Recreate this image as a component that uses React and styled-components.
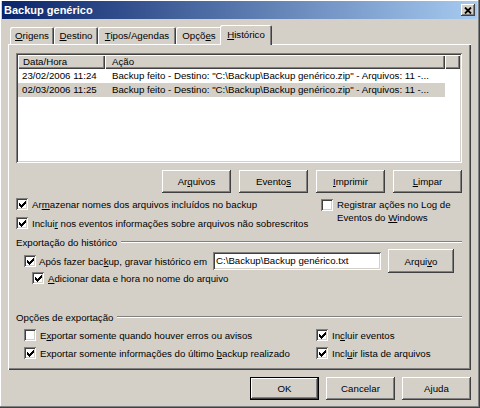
import React from "react";
import styled, { createGlobalStyle, css } from "styled-components";

const GlobalStyle = createGlobalStyle`
  html, body {
    margin: 0;
    padding: 0;
    background: #d4d0c8;
  }
  body {
    font-family: "Liberation Sans", Arial, sans-serif;
    font-size: 9.7px;
    color: #000;
  }
`;

const raised = css`
  box-shadow: inset -1px -1px #404040, inset 1px 1px #fff,
    inset -2px -2px #808080, inset 2px 2px #d4d0c8;
`;

const sunken = css`
  box-shadow: inset 1px 1px #808080, inset -1px -1px #fff,
    inset 2px 2px #404040, inset -2px -2px #d4d0c8;
`;

const Window = styled.div`
  width: 480px;
  height: 408px;
  box-sizing: border-box;
  padding: 1px 3px 3px 2px;
  background: #d4d0c8;
  display: flex;
  flex-direction: column;
  box-shadow: inset -1px -1px #404040, inset -2px -2px #808080,
    inset 1px 1px #fff;
`;

const TitleBar = styled.div`
  height: 18px;
  flex-shrink: 0;
  display: flex;
  align-items: center;
  justify-content: space-between;
  padding: 0 2px;
  background: linear-gradient(to right, #0a246a, #a6caf0);
`;

const Title = styled.span`
  color: #fff;
  font-weight: bold;
  font-size: 11px;
`;

const CloseButton = styled.div`
  width: 14px;
  height: 12px;
  background: #d4d0c8;
  display: flex;
  align-items: center;
  justify-content: center;
  ${raised}
`;

const Body = styled.div`
  flex: 1;
  display: flex;
  flex-direction: column;
  padding: 0 6px;
`;

const TabStrip = styled.div`
  display: flex;
  align-items: flex-end;
  height: 19px;
  margin-top: 6px;
  padding-left: 2px;
`;

const Tab = styled.div`
  width: ${(p) => p.$w}px;
  height: 17px;
  box-sizing: border-box;
  padding-top: 2px;
  text-align: center;
  line-height: 14px;
  background: #d4d0c8;
  border-radius: 2px 2px 0 0;
  box-shadow: inset 1px 1px #fff, inset -1px 0 #404040, inset -2px 0 #808080;
  white-space: nowrap;
  ${(p) =>
    p.$active &&
    css`
      width: ${p.$w + 4}px;
      height: 20px;
      margin: 0 -2px -1px;
      padding-top: 3px;
      position: relative;
      z-index: 1;
    `}
`;

const Panel = styled.div`
  height: 326px;
  box-sizing: border-box;
  padding: 9px 9px 8px 8px;
  display: flex;
  flex-direction: column;
  box-shadow: inset 1px 1px #fff, inset -1px -1px #404040,
    inset -2px -2px #808080;
`;

const ListView = styled.div`
  height: 110px;
  flex-shrink: 0;
  box-sizing: border-box;
  padding: 2px;
  background: #fff;
  display: flex;
  flex-direction: column;
  overflow: hidden;
  ${sunken}
`;

const ListHeader = styled.div`
  display: flex;
  height: 14px;
  flex-shrink: 0;
`;

const HeaderCell = styled.div`
  width: ${(p) => (p.$w ? `${p.$w}px` : "auto")};
  flex: ${(p) => (p.$w ? "0 0 auto" : "1")};
  box-sizing: border-box;
  padding-left: ${(p) => p.$pl || 0}px;
  line-height: 14px;
  background: #d4d0c8;
  box-shadow: inset 1px 1px #fff, inset -1px -1px #404040,
    inset -2px -2px #808080;
`;

const ListRow = styled.div`
  display: flex;
  width: 427px;
  height: 14px;
  line-height: 14px;
  background: ${(p) => (p.$selected ? "#d4d0c8" : "transparent")};
`;

const Cell = styled.div`
  width: ${(p) => p.$w}px;
  flex-shrink: 0;
  box-sizing: border-box;
  padding-left: ${(p) => p.$pl}px;
  white-space: nowrap;
  overflow: hidden;
`;

const ButtonRow = styled.div`
  display: flex;
  justify-content: flex-end;
  gap: 8px;
  margin-top: 7px;
`;

const Button = styled.div`
  width: ${(p) => p.$w || 69}px;
  height: ${(p) => p.$h || 23}px;
  flex-shrink: 0;
  box-sizing: border-box;
  display: flex;
  align-items: center;
  justify-content: center;
  background: #d4d0c8;
  ${raised}
  ${(p) =>
    p.$default &&
    css`
      box-shadow: inset 0 0 0 1px #000, inset -2px -2px #404040,
        inset 2px 2px #fff, inset -3px -3px #808080;
    `}
`;

const OptionsGrid = styled.div`
  display: grid;
  grid-template-columns: ${(p) => p.$col}px 1fr;
  margin-top: 2px;
`;

const Column = styled.div`
  display: flex;
  flex-direction: column;
  gap: ${(p) => p.$gap || 0}px;
  padding-left: ${(p) => p.$indent || 0}px;
`;

const CheckRow = styled.div`
  display: flex;
  align-items: ${(p) => (p.$top ? "flex-start" : "center")};
  gap: 4px;
  height: ${(p) => p.$h || 18}px;
  padding-left: ${(p) => p.$indent || 0}px;
  padding-top: ${(p) => (p.$top ? 3 : 0)}px;
  margin-top: ${(p) => p.$mt || 0}px;
  box-sizing: border-box;
  white-space: nowrap;
`;

const Box = styled.span`
  width: 12px;
  height: 12px;
  flex-shrink: 0;
  box-sizing: border-box;
  background: #fff;
  display: flex;
  align-items: center;
  justify-content: center;
  margin-top: ${(p) => p.$mt || 0}px;
  ${sunken}
`;

const Label = styled.span`
  line-height: 13px;
`;

const GroupTitle = styled.div`
  display: flex;
  align-items: center;
  gap: 4px;
  height: 14px;
  margin-top: ${(p) => p.$mt}px;
  white-space: nowrap;
  &::after {
    content: "";
    flex: 1;
    border-top: 1px solid #808080;
    border-bottom: 1px solid #fff;
  }
`;

const ExportRow = styled.div`
  display: flex;
  align-items: center;
  height: 24px;
  padding: 0 9px 0 8px;
  gap: 3px;
  white-space: nowrap;
`;

const Spacer = styled.div`
  flex: 1;
  min-width: 0;
`;

const TextInput = styled.div`
  width: 168px;
  height: 18px;
  flex-shrink: 0;
  box-sizing: border-box;
  padding: 0 3px;
  line-height: 18px;
  background: #fff;
  margin-right: 4px;
  white-space: nowrap;
  overflow: hidden;
  ${sunken}
`;

const Footer = styled.div`
  display: flex;
  justify-content: flex-end;
  gap: 7px;
  margin-top: 7px;
`;

const CHECK = [
  "......X",
  ".....XX",
  "X...XXX",
  "XX.XXX.",
  "XXXXX..",
  ".XXX...",
  "..X....",
];

const CheckMark = () => (
  <svg width="7" height="7" viewBox="0 0 7 7" shapeRendering="crispEdges">
    {CHECK.flatMap((row, y) =>
      row
        .split("")
        .map((c, x) =>
          c === "X" ? <rect key={`${x}-${y}`} x={x} y={y} width="1" height="1" fill="#000" /> : null
        )
    )}
  </svg>
);

const Check = ({ on, mt }) => <Box $mt={mt}>{on && <CheckMark />}</Box>;

const rows = [
  {
    date: "23/02/2006 11:24",
    text: 'Backup feito - Destino: "C:\\Backup\\Backup genérico.zip" - Arquivos: 11 -...',
  },
  {
    date: "02/03/2006 11:25",
    text: 'Backup feito - Destino: "C:\\Backup\\Backup genérico.zip" - Arquivos: 11 -...',
    selected: true,
  },
];

export default function App() {
  return (
    <>
      <GlobalStyle />
      <Window>
        <TitleBar>
          <Title>Backup genérico</Title>
          <CloseButton>
            <svg width="8" height="7" viewBox="0 0 8 7">
              <path d="M1 0.5 L7 6.5 M7 0.5 L1 6.5" stroke="#000" strokeWidth="1.8" />
            </svg>
          </CloseButton>
        </TitleBar>
        <Body>
          <TabStrip>
            <Tab $w={44}><u>O</u>rigens</Tab>
            <Tab $w={44}><u>D</u>estino</Tab>
            <Tab $w={78}><u>T</u>ipos/Agendas</Tab>
            <Tab $w={46}>Opçõ<u>e</u>s</Tab>
            <Tab $w={48} $active><u>H</u>istórico</Tab>
          </TabStrip>
          <Panel>
            <ListView>
              <ListHeader>
                <HeaderCell $w={87} $pl={5}>Data/Hora</HeaderCell>
                <HeaderCell $w={340} $pl={7}>Ação</HeaderCell>
                <HeaderCell />
              </ListHeader>
              {rows.map((r) => (
                <ListRow key={r.date} $selected={r.selected}>
                  <Cell $w={87} $pl={4}>{r.date}</Cell>
                  <Cell $w={340} $pl={7}>{r.text}</Cell>
                </ListRow>
              ))}
            </ListView>

            <ButtonRow>
              <Button>Ar<u>q</u>uivos</Button>
              <Button>Evento<u>s</u></Button>
              <Button><u>I</u>mprimir</Button>
              <Button><u>L</u>impar</Button>
            </ButtonRow>

            <OptionsGrid $col={305}>
              <Column $gap={1}>
                <CheckRow>
                  <Check on />
                  <Label>Ar<u>m</u>azenar nomes dos arquivos incluídos no backup</Label>
                </CheckRow>
                <CheckRow>
                  <Check on />
                  <Label>Inclui<u>r</u> nos eventos informações sobre arquivos não sobrescritos</Label>
                </CheckRow>
              </Column>
              <Column>
                <CheckRow $top $h={37}>
                  <Check mt={1} />
                  <Label>
                    Registrar ações no Log de
                    <br />
                    Eventos do <u>W</u>indows
                  </Label>
                </CheckRow>
              </Column>
            </OptionsGrid>

            <GroupTitle $mt={3}>Exportação do histórico</GroupTitle>
            <ExportRow>
              <Check on />
              <Label>Após fazer bac<u>k</u>up, gravar histórico em</Label>
              <Spacer />
              <TextInput>C:\Backup\Backup genérico.txt</TextInput>
              <Button $w={66} $h={24}>Arqui<u>v</u>o</Button>
            </ExportRow>
            <CheckRow $h={14} $indent={16} $mt={-2}>
              <Check on />
              <Label><u>A</u>dicionar data e hora no nome do arquivo</Label>
            </CheckRow>

            <GroupTitle $mt={25}>Opções de exportação</GroupTitle>
            <OptionsGrid $col={300}>
              <Column $indent={8}>
                <CheckRow>
                  <Check />
                  <Label>E<u>x</u>portar somente quando houver erros ou avisos</Label>
                </CheckRow>
                <CheckRow>
                  <Check on />
                  <Label>Exportar somente informações do último <u>b</u>ackup realizado</Label>
                </CheckRow>
              </Column>
              <Column>
                <CheckRow>
                  <Check on />
                  <Label>In<u>c</u>luir eventos</Label>
                </CheckRow>
                <CheckRow>
                  <Check on />
                  <Label>Incl<u>u</u>ir lista de arquivos</Label>
                </CheckRow>
              </Column>
            </OptionsGrid>
          </Panel>
          <Footer>
            <Button $default>OK</Button>
            <Button>Cancelar</Button>
            <Button>Ajuda</Button>
          </Footer>
        </Body>
      </Window>
    </>
  );
}
